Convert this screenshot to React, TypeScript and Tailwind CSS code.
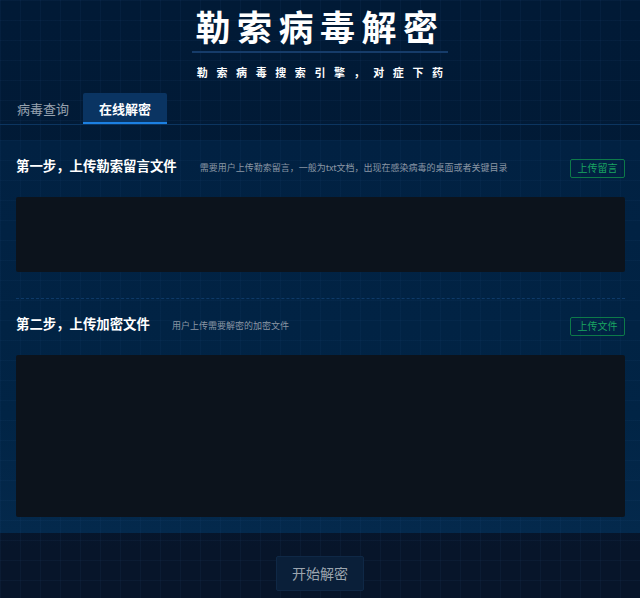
import React from 'react'

function UploadButton({ label }: { label: string }) {
  return (
    <button
      type="button"
      className="h-[19px] w-[55px] rounded-[2px] border border-[#0d7a49] text-[10px] leading-none text-[#1aa661]"
    >
      {label}
    </button>
  )
}

function StepHeader({
  title,
  desc,
  descGap,
  button,
}: {
  title: string
  desc: string
  descGap: string
  button: string
}) {
  return (
    <div className="flex h-[19px] items-center">
      <h2 className="text-[13.4px] font-bold leading-none text-white">{title}</h2>
      <p className={`${descGap} mt-[3px] text-[9px] leading-none text-[#8b97a5]`}>{desc}</p>
      <div className="ml-auto">
        <UploadButton label={button} />
      </div>
    </div>
  )
}

export default function App() {
  return (
    <div className="min-h-[598px] w-full overflow-hidden bg-[#03182f] bg-[image:linear-gradient(rgba(60,110,170,0.07)_1px,transparent_1px),linear-gradient(90deg,rgba(60,110,170,0.07)_1px,transparent_1px),linear-gradient(180deg,#011a36,#011b37_60%,#07152a_92%)] bg-[size:20px_20px,20px_20px,100%_100%] font-['Noto_Sans_CJK_SC','Noto_Sans',sans-serif]">
      {/* Title block */}
      <header className="flex flex-col items-center pt-[6px]">
        <h1 className="text-[35px] font-bold leading-[40px] tracking-[6.5px] text-white">
          勒索病毒解密
        </h1>
        <div className="mt-[5px] h-[2px] w-[256px] bg-[#163c6a]" />
        <p className="mt-[12px] pl-[8.5px] text-[11px] font-bold leading-[14px] tracking-[8.6px] text-white">
          勒索病毒搜索引擎，对症下药
        </p>
      </header>

      {/* Tabs */}
      <nav className="mt-[14px] flex h-[32px] items-end border-b border-[#0c3560]">
        <button
          type="button"
          className="flex h-[31px] w-[83px] items-center pl-[17px] text-[13px] text-[#98a3b0]"
        >
          病毒查询
        </button>
        <button
          type="button"
          className="flex h-[31px] w-[84px] items-center justify-center rounded-t-[2px] border-b-2 border-[#1c80e2] bg-[#0a3462] pt-[2px] text-[13px] font-bold text-white"
        >
          在线解密
        </button>
      </nav>

      {/* Decrypt panel */}
      <section className="mt-[15px] bg-[#012244] bg-[image:linear-gradient(rgba(60,110,170,0.06)_1px,transparent_1px),linear-gradient(90deg,rgba(60,110,170,0.06)_1px,transparent_1px),linear-gradient(180deg,#012142,#012445_70%,#04294c)] bg-[size:20px_20px,20px_20px,100%_100%] pl-4 pr-[15px] pt-[16px] pb-[16px]">
        <StepHeader
          title="第一步，上传勒索留言文件"
          desc="需要用户上传勒索留言，一般为txt文档，出现在感染病毒的桌面或者关键目录"
          descGap="ml-[23px]"
          button="上传留言"
        />
        <div className="mt-[22px] h-[75px] rounded-[2px] bg-[#0c131c]" />

        <div className="mt-[26px] border-t border-dashed border-[#0e3a68]" />

        <div className="mt-[15px]">
          <StepHeader
            title="第二步，上传加密文件"
            desc="用户上传需要解密的加密文件"
            descGap="ml-[22px]"
            button="上传文件"
          />
        </div>
        <div className="mt-[22px] h-[162px] rounded-[2px] bg-[#0c131c]" />
      </section>

      <div className="flex justify-center pt-[23px] pb-[7px]">
        <button
          type="button"
          className="h-[35px] w-[88px] rounded-[2px] border border-[#0f2846] bg-[#0a1f39] text-[14px] text-[#9ca5af]"
        >
          开始解密
        </button>
      </div>
    </div>
  )
}
